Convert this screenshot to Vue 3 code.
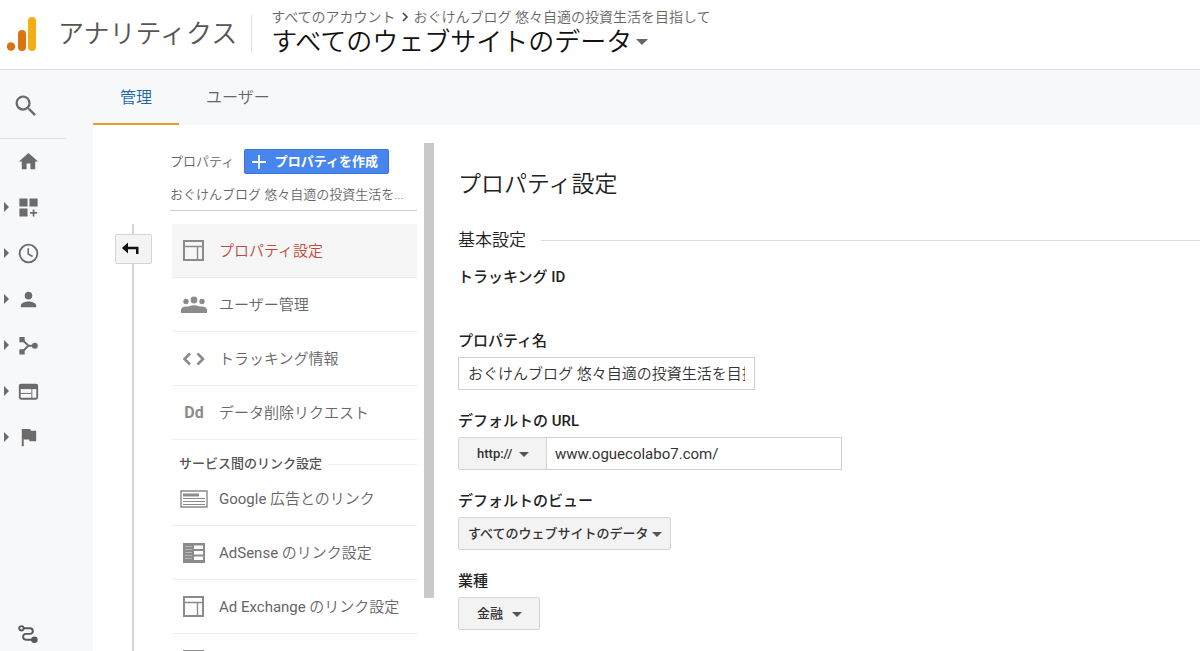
<script setup>
import { ref } from 'vue'

const navItems = ['home', 'custom', 'realtime', 'audience', 'acquisition', 'behavior', 'conversion']
const navLabels = {
  home: 'ホーム',
  custom: 'カスタム',
  realtime: 'リアルタイム',
  audience: 'ユーザー',
  acquisition: '集客',
  behavior: '行動',
  conversion: 'コンバージョン',
}
const settings = [
  { icon: 'layout', label: 'プロパティ設定', active: true },
  { icon: 'people', label: 'ユーザー管理' },
  { icon: 'code', label: 'トラッキング情報' },
  { icon: 'dd', label: 'データ削除リクエスト' },
]
const links = [
  { icon: 'ads', brand: 'Google', label: ' 広告とのリンク' },
  { icon: 'adsense', brand: 'AdSense', label: ' のリンク設定' },
  { icon: 'layout', brand: 'Ad Exchange', label: ' のリンク設定' },
  { icon: 'layout', label: '' },
]
const propertyName = ref('おぐけんブログ 悠々自適の投資生活を目指して')
const url = ref('www.oguecolabo7.com/')
</script>

<template>
  <div class="app">
    <header class="header">
      <svg class="logo" width="30" height="36" viewBox="0 0 30 36" aria-hidden="true">
        <circle cx="4" cy="29.500" r="4.200" fill="#dc7312" />
        <rect x="11" y="13" width="8" height="21" rx="4" fill="#dc7312" />
        <rect x="21" y="0" width="8" height="34" rx="4" fill="#f4ae14" />
      </svg>
      <span class="product">アナリティクス</span>
      <div class="account">
        <div class="crumbs">
          <span>すべてのアカウント</span>
          <svg width="8" height="10" viewBox="0 0 8 10"><path d="M2 1l4 4-4 4" fill="none" stroke="#444" stroke-width="1.6" /></svg>
          <span>おぐけんブログ 悠々自適の投資生活を目指して</span>
        </div>
        <button class="view" type="button">
          <span>すべてのウェブサイトのデータ</span>
          <svg width="12" height="6" viewBox="0 0 12 6"><path d="M0 0h12L6 6z" fill="#666" /></svg>
        </button>
      </div>
    </header>

    <div class="body">
      <nav class="rail">
        <button class="search" type="button" aria-label="検索">
          <svg width="28" height="28" viewBox="0 0 24 24"><path fill="#6b6b6b" d="M15.5 14h-.79l-.28-.27A6.471 6.471 0 0 0 16 9.5 6.5 6.5 0 1 0 9.5 16c1.61 0 3.09-.59 4.23-1.57l.27.28v.79l5 4.99L20.49 19l-4.99-5zm-6 0C7.01 14 5 11.99 5 9.5S7.01 5 9.5 5 14 7.01 14 9.5 11.99 14 9.5 14z" /></svg>
        </button>
        <button v-for="n in navItems" :key="n" class="nav" type="button" :aria-label="navLabels[n]">
          <svg class="caret" width="5" height="10" viewBox="0 0 5 10"><path v-if="n !== 'home'" d="M0 0l5 5-5 5z" fill="#6b6b6b" /></svg>
          <svg width="23" height="23" viewBox="0 0 24 24" fill="#6b6b6b">
            <path v-if="n === 'home'" d="M10 20v-6h4v6h5v-8h3L12 3 2 12h3v8z" />
            <path v-else-if="n === 'custom'" d="M2.500 2.500h8.500v8.500h-8.500zM13 2.500h8.500v8.500H13zM2.500 13h8.500v8.500h-8.500zM16.400 14h1.800v2.800H21v1.800h-2.800v2.800h-1.800v-2.800h-2.800v-1.800h2.800z" />
            <g v-else-if="n === 'realtime'" fill="none" stroke="#6b6b6b">
              <circle cx="12" cy="12" r="9.200" stroke-width="1.900" />
              <path d="M11.700 6.500v6l4.600 2.600" stroke-width="1.600" />
            </g>
            <path v-else-if="n === 'audience'" d="M12 12c2.210 0 4-1.790 4-4s-1.790-4-4-4-4 1.790-4 4 1.790 4 4 4zm0 2c-2.670 0-8 1.340-8 4v2h16v-2c0-2.660-5.330-4-8-4z" />
            <g v-else-if="n === 'acquisition'">
              <path d="M2.500 3h5.500v5.500h-5.500zM2.500 16h5.500v5.500h-5.500z" />
              <path d="M5.500 6L12 12.200 5.500 18.500M12 12.200h7" fill="none" stroke="#6b6b6b" stroke-width="2" />
              <circle cx="18.600" cy="12.200" r="3.100" />
            </g>
            <g v-else-if="n === 'behavior'">
              <rect x="2.900" y="4.900" width="18.200" height="14.700" rx="1.300" fill="none" stroke="#6b6b6b" stroke-width="1.900" />
              <path d="M2.500 5h19v4.500h-19z" />
              <path d="M3 14h12M15.500 9v10" fill="none" stroke="#6b6b6b" />
            </g>
            <path v-else d="M14.400 5L14 3H5v18h2v-7h5.600l.4 2h7V5z" />
          </svg>
        </button>
        <button class="nav attribution" type="button" aria-label="アトリビューション">
          <svg width="20" height="18" viewBox="0 0 20 18" fill="none" stroke="#55585c" stroke-width="1.900">
            <circle cx="3.400" cy="3.300" r="2.200" />
            <path d="M5.600 3.300H12a2.800 2.800 0 0 1 0 5.600H8a2.900 2.900 0 0 0 0 5.800h6" />
            <circle cx="16.400" cy="14.700" r="2.300" fill="#55585c" />
          </svg>
        </button>
      </nav>

      <div class="workspace">
        <div class="tabs" role="tablist">
          <button class="tab current" type="button" role="tab" aria-selected="true">管理</button>
          <button class="tab" type="button" role="tab" aria-selected="false">ユーザー</button>
        </div>

        <div class="content">
          <div class="timeline">
            <button class="back" type="button" aria-label="戻る">
              <svg width="18" height="14" viewBox="0 0 18 14"><path d="M0 6l6-5.500V4.800h10.500V12H14V7.300H6v4.200z" fill="#111" /></svg>
            </button>
          </div>

          <aside class="panel">
            <div class="panel-top">
              <span>プロパティ</span>
              <button class="create" type="button">
                <svg width="14" height="14" viewBox="0 0 14 14"><path d="M7 0v14M0 7h14" stroke="#fff" stroke-width="1.800" /></svg>
                <span>プロパティを作成</span>
              </button>
            </div>
            <div class="property">おぐけんブログ 悠々自適の投資生活を...</div>
            <div class="menu">
              <template v-for="(group, g) in [settings, links]" :key="g">
                <h3 v-if="g === 1" class="group">サービス間のリンク設定</h3>
                <a v-for="(item, i) in group" :key="i" href="#" class="item" :class="{ active: item.active }" @click.prevent>
                  <span class="glyph">
                    <svg v-if="item.icon === 'layout'" width="22" height="22" viewBox="0 0 22 22" fill="none" stroke="#8b8b8b">
                      <path d="M1 1h19v19H1z" stroke-width="2" />
                      <path d="M2 6.500h17M14.500 6.500V19" stroke-width="1.400" />
                    </svg>
                    <svg v-else-if="item.icon === 'people'" width="26" height="18" viewBox="0 0 26 18" fill="#8b8b8b">
                      <circle cx="13" cy="4" r="3.400" /><circle cx="5" cy="5.500" r="2.700" /><circle cx="21" cy="5.500" r="2.700" />
                      <path d="M0 17v-3.500Q1 10.800 5 10.600Q7 10.400 8 10.600Q10 9.300 13 9.300T18 10.600Q19 10.400 21 10.600Q25 10.800 26 13.500V17z" />
                    </svg>
                    <svg v-else-if="item.icon === 'code'" width="24" height="14" viewBox="0 0 24 14" fill="none" stroke="#8b8b8b" stroke-width="2.600">
                      <path d="M8 1.500L2.500 7l5.500 5.500M15.500 1.500L21 7l-5.500 5.500" />
                    </svg>
                    <span v-else-if="item.icon === 'dd'" class="dd">Dd</span>
                    <svg v-else-if="item.icon === 'ads'" width="28" height="18" viewBox="0 0 28 18" stroke="#8b8b8b" fill="none">
                      <path d="M1 1h26v16H1z" stroke-width="1.400" />
                      <path d="M3 5h16" stroke-width="3" />
                      <path d="M3 8.500h22M3 11.500h22M3 14.500h22" />
                    </svg>
                    <svg v-else width="22" height="20" viewBox="0 0 22 20">
                      <path d="M0 0h22v20H0z" fill="#8b8b8b" />
                      <path d="M11 2.500h9v3.500h-9zM11 8h9v3.500h-9zM11 13.500h9V17h-9z" fill="#fff" />
                      <path d="M2 3.500h7M2 6.500h7M2 9.500h7M2 12.500h7M2 15.500h7" stroke="#b5b5b5" />
                    </svg>
                  </span>
                  <span class="caption"><span v-if="item.brand" class="brand">{{ item.brand }}</span>{{ item.label }}</span>
                </a>
              </template>
            </div>
          </aside>

          <div class="scrollbar"></div>

          <main class="main">
            <h1>プロパティ設定</h1>
            <h2>基本設定</h2>
            <div class="tracking">トラッキング ID</div>

            <div class="field">
              <label for="name">プロパティ名</label>
              <input id="name" v-model="propertyName" class="text name" type="text" />
            </div>
            <div class="field">
              <label for="url">デフォルトの URL</label>
              <div class="row">
                <span class="pick scheme">
                  <select aria-label="プロトコル"><option>http://</option><option>https://</option></select>
                  <svg width="10" height="5" viewBox="0 0 10 5"><path d="M0 0h10L5 5z" fill="#555" /></svg>
                </span>
                <input id="url" v-model="url" class="text url" type="text" />
              </div>
            </div>
            <div class="field">
              <label for="view">デフォルトのビュー</label>
              <span class="pick default-view">
                <select id="view"><option>すべてのウェブサイトのデータ</option></select>
                <svg width="10" height="5" viewBox="0 0 10 5"><path d="M0 0h10L5 5z" fill="#555" /></svg>
              </span>
            </div>
            <div class="field">
              <label for="industry">業種</label>
              <span class="pick industry">
                <select id="industry"><option>金融</option></select>
                <svg width="10" height="5" viewBox="0 0 10 5"><path d="M0 0h10L5 5z" fill="#555" /></svg>
              </span>
            </div>
          </main>
        </div>
      </div>
    </div>
  </div>
</template>

<style>
body {
  margin: 0;
}
</style>

<style scoped>
.app,
.app * {
  box-sizing: border-box;
}
.app {
  display: flex;
  flex-direction: column;
  height: 100vh;
  overflow: hidden;
  background: #fff;
  color: #222;
  font-family: Roboto, 'Noto Sans CJK JP', sans-serif;
  font-weight: 350;
}
button,
input,
select {
  font: inherit;
  color: inherit;
}
button {
  padding: 0;
  border: 0;
  background: none;
  cursor: pointer;
}
svg {
  display: block;
  flex: none;
}
h1,
h2,
h3 {
  margin: 0;
  font-weight: 350;
}

.header {
  display: flex;
  flex: none;
  height: 70px;
  padding-left: 7px;
  border-bottom: 1px solid #dcdde0;
}
.logo {
  margin-top: 17px;
}
.product {
  margin-left: 21px;
  font-size: 26px;
  line-height: 68px;
  color: #555;
}
.account {
  align-self: flex-start;
  height: 37px;
  margin: 15px 0 0 14px;
  padding-left: 19px;
  border-left: 1px solid #ddd;
}
.crumbs {
  display: flex;
  align-items: center;
  gap: 5px;
  margin-top: -8px;
  font-size: 14px;
  line-height: 20px;
  color: #666;
}
.view {
  display: flex;
  align-items: center;
  gap: 4px;
  font-size: 26px;
  line-height: 30px;
  color: #111;
}

.body {
  display: flex;
  flex: 1;
  min-height: 0;
}
.rail {
  display: flex;
  flex-direction: column;
  flex: none;
  width: 93px;
  background: #f7f8fa;
}
.search {
  display: flex;
  align-items: center;
  width: 66px;
  height: 69px;
  margin-bottom: -1px;
  padding: 3px 0 0 12px;
  border-bottom: 1px solid #dcdee0;
}
.nav {
  display: flex;
  align-items: center;
  gap: 13px;
  height: 46px;
  padding-left: 4px;
}
.nav .caret {
  margin-right: -5px;
}
.attribution {
  margin-top: auto;
  padding-left: 18px;
  height: 35px;
}

.workspace {
  display: flex;
  flex-direction: column;
  flex: 1;
  min-width: 0;
}
.tabs {
  display: flex;
  flex: none;
  height: 55px;
  background: #f7f8fa;
}
.tab {
  padding: 0 27px 2px;
  border-bottom: 2px solid transparent;
  font-size: 16px;
  color: #666;
}
.tab.current {
  border-color: #dfa02c;
  color: #1967a8;
}
.content {
  display: flex;
  flex: 1;
  min-height: 0;
}
.timeline {
  display: flex;
  flex: none;
  justify-content: center;
  width: 38px;
  margin: 99px 18px 0 21px;
  background: linear-gradient(#d4d4d4, #d4d4d4) center / 2px 100% no-repeat;
}
.back {
  display: flex;
  align-items: center;
  justify-content: center;
  width: 37px;
  height: 30px;
  margin-top: 10px;
  padding-right: 4px;
  border: 1px solid #d4d4d4;
  border-radius: 2px;
  background: #f4f4f4;
}

.panel {
  flex: none;
  width: 247px;
  padding-top: 24px;
}
.panel-top {
  display: flex;
  align-items: center;
  justify-content: space-between;
  height: 25px;
  padding-right: 28px;
  font-size: 13px;
  color: #666;
}
.panel-top > span,
.create span {
  padding-bottom: 2px;
}
.create {
  display: flex;
  align-items: center;
  gap: 9px;
  height: 25px;
  padding: 0 10px 0 7px;
  border: 1px solid #3a72d8;
  border-radius: 2px;
  background: #4787ed;
  color: #fff;
  font-size: 13px;
  font-weight: 700;
}
.property {
  height: 37px;
  padding-top: 9px;
  border-bottom: 1px solid #ccc;
  font-size: 13px;
  line-height: 24px;
  color: #666;
}
.menu {
  padding: 13px 0 0 2px;
}
.item {
  display: flex;
  align-items: center;
  height: 54px;
  padding-left: 8px;
  border-bottom: 1px solid #ececec;
  color: #666;
  font-size: 15px;
  text-decoration: none;
}
.item.active {
  background: #f6f6f6;
  color: #c14b3a;
}
.glyph {
  display: flex;
  justify-content: center;
  width: 28px;
  margin-right: 11px;
}
.caption {
  padding-bottom: 2px;
}
.brand {
  font-weight: 400;
}
.dd {
  font-size: 16px;
  font-weight: 700;
  color: #8b8b8b;
}
.group {
  display: flex;
  align-items: center;
  gap: 6px;
  height: 32px;
  padding: 16px 0 0 7px;
  font-size: 13px;
  line-height: 16px;
  font-weight: 500;
  color: #555;
}
.group::after,
h2::after {
  content: '';
  flex: 1;
  height: 1px;
  background: #ececec;
}
.scrollbar {
  flex: none;
  width: 10px;
  height: 455px;
  margin: 18px 24px 0 7px;
  background: #c9c9c9;
}

.main {
  flex: 1;
  min-width: 0;
  padding-top: 44px;
}
h1 {
  font-size: 23px;
  line-height: 32px;
}
h2 {
  display: flex;
  align-items: center;
  gap: 15px;
  margin-top: 27px;
  font-size: 17px;
  line-height: 24px;
}
h2::after {
  background: #ddd;
}
.tracking,
label {
  display: block;
  font-size: 15px;
  line-height: 24px;
  font-weight: 500;
}
.tracking {
  margin: 13px 0 40px;
}
.field {
  margin-bottom: 19px;
}
.field label {
  margin-bottom: 4px;
}
.row {
  display: flex;
}
.text {
  display: block;
  height: 33px;
  padding: 0 9px;
  border: 1px solid #d0d0d0;
  outline: 0;
  background: #fff;
  color: #333;
  font-size: 15px;
}
.name {
  width: 297px;
  padding-bottom: 2px;
}
.url {
  width: 296px;
  padding-left: 8px;
  font-weight: 400;
}
.pick {
  display: block;
  position: relative;
  width: max-content;
}
.pick select {
  display: block;
  width: 100%;
  height: 33px;
  padding: 0 0 0 9px;
  border: 1px solid #d4d4d4;
  border-radius: 2px;
  appearance: none;
  background: #f3f3f3;
  color: #333;
  font-size: 13px;
  font-weight: 500;
}
.pick svg {
  position: absolute;
  top: 15px;
  right: 9px;
  pointer-events: none;
}
.scheme {
  width: 89px;
  margin-right: -1px;
}
.scheme select,
.industry select {
  padding-left: 18px;
}
.scheme svg,
.industry svg {
  right: 18px;
}
.default-view {
  width: 213px;
}
.industry {
  width: 82px;
}
</style>
